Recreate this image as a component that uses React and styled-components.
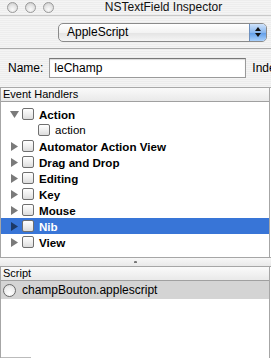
import React from "react";
import styled, { createGlobalStyle } from "styled-components";

const GlobalStyle = createGlobalStyle`
  html, body {
    margin: 0;
    padding: 0;
    background: #fff;
  }
  body {
    font-family: "Liberation Sans", "DejaVu Sans", sans-serif;
  }
`;

const stripes = `repeating-linear-gradient(
  to bottom,
  #ededed 0px,
  #ededed 1px,
  #f4f4f4 1px,
  #f4f4f4 2px
)`;

const Window = styled.div`
  width: 271px;
  height: 358px;
  overflow: hidden;
  display: flex;
  flex-direction: column;
  background: #fff;
`;

const TitleBar = styled.div`
  height: 15px;
  display: flex;
  align-items: center;
  background: ${stripes};
  border-bottom: 1px solid #c9c9c9;
`;

const Lights = styled.div`
  display: flex;
  gap: 7px;
  padding-left: 7px;
`;

const Light = styled.span`
  width: 11px;
  height: 11px;
  border-radius: 50%;
  border: 1px solid #9a9a9a;
  box-sizing: border-box;
  background: radial-gradient(circle at 50% 70%, #fafafa 0%, #e2e2e2 55%, #c2c2c2 100%);
`;

const Title = styled.div`
  flex: 1;
  text-align: center;
  font-size: 12px;
  color: #111;
  padding-left: 2px;
`;

const Toolbar = styled.div`
  height: 32px;
  background: ${stripes};
  border-bottom: 1px solid #a9a9a9;
  display: flex;
  align-items: center;
  padding-left: 58px;
  padding-top: 1px;
`;

const Popup = styled.div`
  width: 209px;
  height: 19px;
  box-sizing: border-box;
  border: 1px solid #8a8a8a;
  border-radius: 5px;
  background: linear-gradient(#ffffff, #f3f3f3 50%, #e3e3e3 51%, #f5f5f5);
  display: flex;
  align-items: center;
  overflow: hidden;
`;

const PopupLabel = styled.span`
  flex: 1;
  font-size: 12px;
  padding-left: 8px;
  color: #000;
`;

const Stepper = styled.span`
  width: 16px;
  height: 100%;
  background: linear-gradient(#cfe3fb, #8ab7ee 50%, #5d9be8 51%, #a9d0fb);
  border-left: 1px solid #6d8fbd;
  display: flex;
  align-items: center;
  justify-content: center;
`;

const NameRow = styled.div`
  height: 39px;
  background: ${stripes};
  border-bottom: 1px solid #a9a9a9;
  display: flex;
  align-items: center;
  padding-left: 8px;
  gap: 6px;
  font-size: 12px;
  white-space: nowrap;
`;

const NameField = styled.div`
  width: 197px;
  height: 20px;
  flex-shrink: 0;
  box-sizing: border-box;
  border: 1px solid #9a9a9a;
  border-top-color: #777;
  background: #fff;
  display: flex;
  align-items: center;
  padding-left: 4px;
  box-shadow: inset 0 1px 1px rgba(0, 0, 0, 0.15);
`;

const Panel = styled.div`
  display: flex;
  flex-direction: column;
  border-left: 1px solid #a6a6a6;
  border-right: 1px solid #a6a6a6;
  width: 270px;
  box-sizing: border-box;
  height: ${p => p.$h}px;
  flex-shrink: 0;
`;

const Header = styled.div`
  height: 13px;
  line-height: 13px;
  font-size: 11px;
  padding-left: 2px;
  color: #000;
  background: linear-gradient(#fafafa, #e9e9e9);
  border-bottom: 1px solid #a0a0a0;
`;

const Rows = styled.div`
  flex: 1;
  padding-top: 4px;
  background: #fff;
`;

const Row = styled.div`
  height: 16px;
  display: flex;
  align-items: center;
  padding-left: ${p => (p.$child ? 37 : 8)}px;
  background: ${p => (p.$selected ? "#3875d7" : "transparent")};
  color: ${p => (p.$selected ? "#fff" : "#000")};
  font-size: ${p => (p.$child ? 11.5 : 11.6)}px;
  font-weight: ${p => (p.$child ? "normal" : "bold")};
`;

const Disclosure = styled.span`
  width: 10px;
  height: 10px;
  margin-right: 3px;
  display: flex;
  align-items: center;
  justify-content: center;
`;

const Check = styled.span`
  width: 12px;
  height: 12px;
  box-sizing: border-box;
  border: 1px solid #6f6f6f;
  border-radius: 2px;
  background: linear-gradient(#ffffff, #ececec 60%, #dcdcdc);
  margin-right: 5px;
  flex-shrink: 0;
`;

const Splitter = styled.div`
  height: 8px;
  flex-shrink: 0;
  border-top: 1px solid #a6a6a6;
  border-bottom: 1px solid #a6a6a6;
  background: linear-gradient(#f7f7f7, #e9e9e9);
  display: flex;
  align-items: center;
  justify-content: center;
`;

const Dot = styled.span`
  width: 3px;
  height: 2px;
  background: #777;
  border-radius: 1px 1px 0 0;
`;

const ScriptRow = styled.div`
  height: 18px;
  display: flex;
  align-items: center;
  padding-left: 2px;
  background: #d4d4d4;
  font-size: 12px;
  gap: 6px;
`;

const Radio = styled.span`
  width: 13px;
  height: 13px;
  border-radius: 50%;
  box-sizing: border-box;
  border: 1px solid #6a6a6a;
  background: radial-gradient(circle at 50% 75%, #ffffff 0%, #ececec 60%, #cfcfcf 100%);
`;

const BottomEdge = styled.div`
  height: 1px;
  width: 30px;
  background: #bbb;
  margin-top: auto;
`;

const Triangle = ({ open, selected }) => (
  <svg width="9" height="9" viewBox="0 0 9 9">
    {open ? (
      <path d="M0 1 L9 1 L4.5 8 Z" fill="#7a7a7a" />
    ) : (
      <path d="M1 0 L8 4.5 L1 9 Z" fill={selected ? "#1c3966" : "#7a7a7a"} />
    )}
  </svg>
);

const handlers = [
  { name: "Action", open: true },
  { name: "action", child: true },
  { name: "Automator Action View" },
  { name: "Drag and Drop" },
  { name: "Editing" },
  { name: "Key" },
  { name: "Mouse" },
  { name: "Nib", selected: true },
  { name: "View" },
];

const App = () => {
  return (
    <Window>
      <GlobalStyle />
      <TitleBar>
        <Lights>
          <Light />
          <Light />
          <Light />
        </Lights>
        <Title>NSTextField Inspector</Title>
      </TitleBar>
      <Toolbar>
        <Popup>
          <PopupLabel>AppleScript</PopupLabel>
          <Stepper>
            <svg width="6" height="10" viewBox="0 0 6 10">
              <path d="M3 0 L6 4 L0 4 Z" fill="#111" />
              <path d="M0 6 L6 6 L3 10 Z" fill="#111" />
            </svg>
          </Stepper>
        </Popup>
      </Toolbar>
      <NameRow>
        <span>Name:</span>
        <NameField>leChamp</NameField>
        <span>Index</span>
      </NameRow>
      <Panel $h={169}>
        <Header>Event Handlers</Header>
        <Rows>
          {handlers.map(h => (
            <Row key={h.name} $child={h.child} $selected={h.selected}>
              {!h.child && (
                <Disclosure>
                  <Triangle open={h.open} selected={h.selected} />
                </Disclosure>
              )}
              <Check />
              {h.name}
            </Row>
          ))}
        </Rows>
      </Panel>
      <Splitter>
        <Dot />
      </Splitter>
      <Panel $h={91}>
        <Header>Script</Header>
        <ScriptRow>
          <Radio />
          champBouton.applescript
        </ScriptRow>
        <BottomEdge />
      </Panel>
    </Window>
  );
};

export default App;
